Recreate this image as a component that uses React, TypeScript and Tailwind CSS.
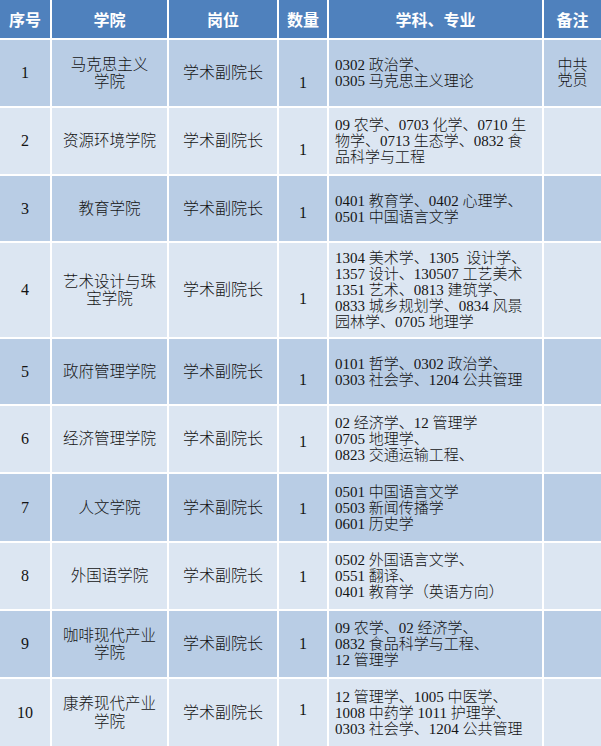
import React from "react";

type Row = {
  no: string;
  college: string[];
  qtyPad: string;
  subjects: string[];
  note?: string[];
  dark: boolean;
};

const rows: Row[] = [
  { no: "1", college: ["马克思主义", "学院"], qtyPad: "pt-[19px]", subjects: ["0302 政治学、", "0305 马克思主义理论"], note: ["中共", "党员"], dark: true },
  { no: "2", college: ["资源环境学院"], qtyPad: "pt-[17px]", subjects: ["09 农学、0703 化学、0710 生", "物学、0713 生态学、0832 食", "品科学与工程"], dark: false },
  { no: "3", college: ["教育学院"], qtyPad: "pt-[8px]", subjects: ["0401 教育学、0402 心理学、", "0501 中国语言文学"], dark: true },
  { no: "4", college: ["艺术设计与珠", "宝学院"], qtyPad: "pt-[17px]", subjects: ["1304 美术学、1305\u00a0\u00a0设计学、", "1357 设计、130507 工艺美术", "1351 艺术、0813 建筑学、", "0833 城乡规划学、0834 风景", "园林学、0705 地理学"], dark: false },
  { no: "5", college: ["政府管理学院"], qtyPad: "pt-[16px]", subjects: ["0101 哲学、0302 政治学、", "0303 社会学、1204 公共管理"], dark: true },
  { no: "6", college: ["经济管理学院"], qtyPad: "pt-[5px]", subjects: ["02 经济学、12 管理学", "0705 地理学、", "0823 交通运输工程、"], dark: false },
  { no: "7", college: ["人文学院"], qtyPad: "pt-[2px]", subjects: ["0501 中国语言文学", "0503 新闻传播学", "0601 历史学"], dark: true },
  { no: "8", college: ["外国语学院"], qtyPad: "pt-[1px]", subjects: ["0502 外国语言文学、", "0551 翻译、", "0401 教育学（英语方向）"], dark: false },
  { no: "9", college: ["咖啡现代产业", "学院"], qtyPad: "pt-0", subjects: ["09 农学、02 经济学、", "0832 食品科学与工程、", "12 管理学"], dark: true },
  { no: "10", college: ["康养现代产业", "学院"], qtyPad: "pb-[6px]", subjects: ["12 管理学、1005 中医学、", "1008 中药学 1011 护理学、", "0303 社会学、1204 公共管理"], dark: false },
];

const headers = ["序号", "学院", "岗位", "数量", "学科、专业", "备注"];

export default function App() {
  return (
    <div
      className="w-[601px] h-[746px] bg-white text-[#141414] overflow-hidden"
      style={{ fontFamily: "'Liberation Serif', 'Noto Sans CJK SC', serif" }}
    >
      <div className="grid grid-cols-[50px_115px_108px_48px_213px_57px] grid-rows-[38px_66px_66px_65px_94px_65px_66px_67px_66px_66px_67px] gap-[2px] bg-white">
        {headers.map((h) => (
          <div
            key={h}
            className="bg-[#4f81bd] flex items-center justify-center text-white font-bold text-[16px] leading-none"
            style={{ fontFamily: "'Noto Sans CJK SC', sans-serif" }}
          >
            {h}
          </div>
        ))}
        {rows.map((r) => {
          const bg = r.dark ? "bg-[#b9cde5]" : "bg-[#dce6f2]";
          return (
            <React.Fragment key={r.no}>
              <div className={`${bg} flex items-center justify-center text-[16px] font-light`}>{r.no}</div>
              <div className={`${bg} flex flex-col items-center justify-center text-[15.5px] leading-[17.2px] font-light text-center`}>
                {r.college.map((c) => (
                  <div key={c} className="whitespace-nowrap">{c}</div>
                ))}
              </div>
              <div className={`${bg} flex items-center justify-center text-[16px] font-light`}>学术副院长</div>
              <div className={`${bg} flex items-center justify-center text-[16px] font-light ${r.qtyPad}`}>1</div>
              <div className={`${bg} flex flex-col justify-center pl-[6px] text-[15px] leading-[16px] font-light`}>
                {r.subjects.map((s) => (
                  <div key={s} className="whitespace-nowrap">{s}</div>
                ))}
              </div>
              <div className={`${bg} flex flex-col items-center justify-center text-[15px] leading-[15px] font-light`}>
                {r.note?.map((n) => (
                  <div key={n}>{n}</div>
                ))}
              </div>
            </React.Fragment>
          );
        })}
      </div>
    </div>
  );
}
